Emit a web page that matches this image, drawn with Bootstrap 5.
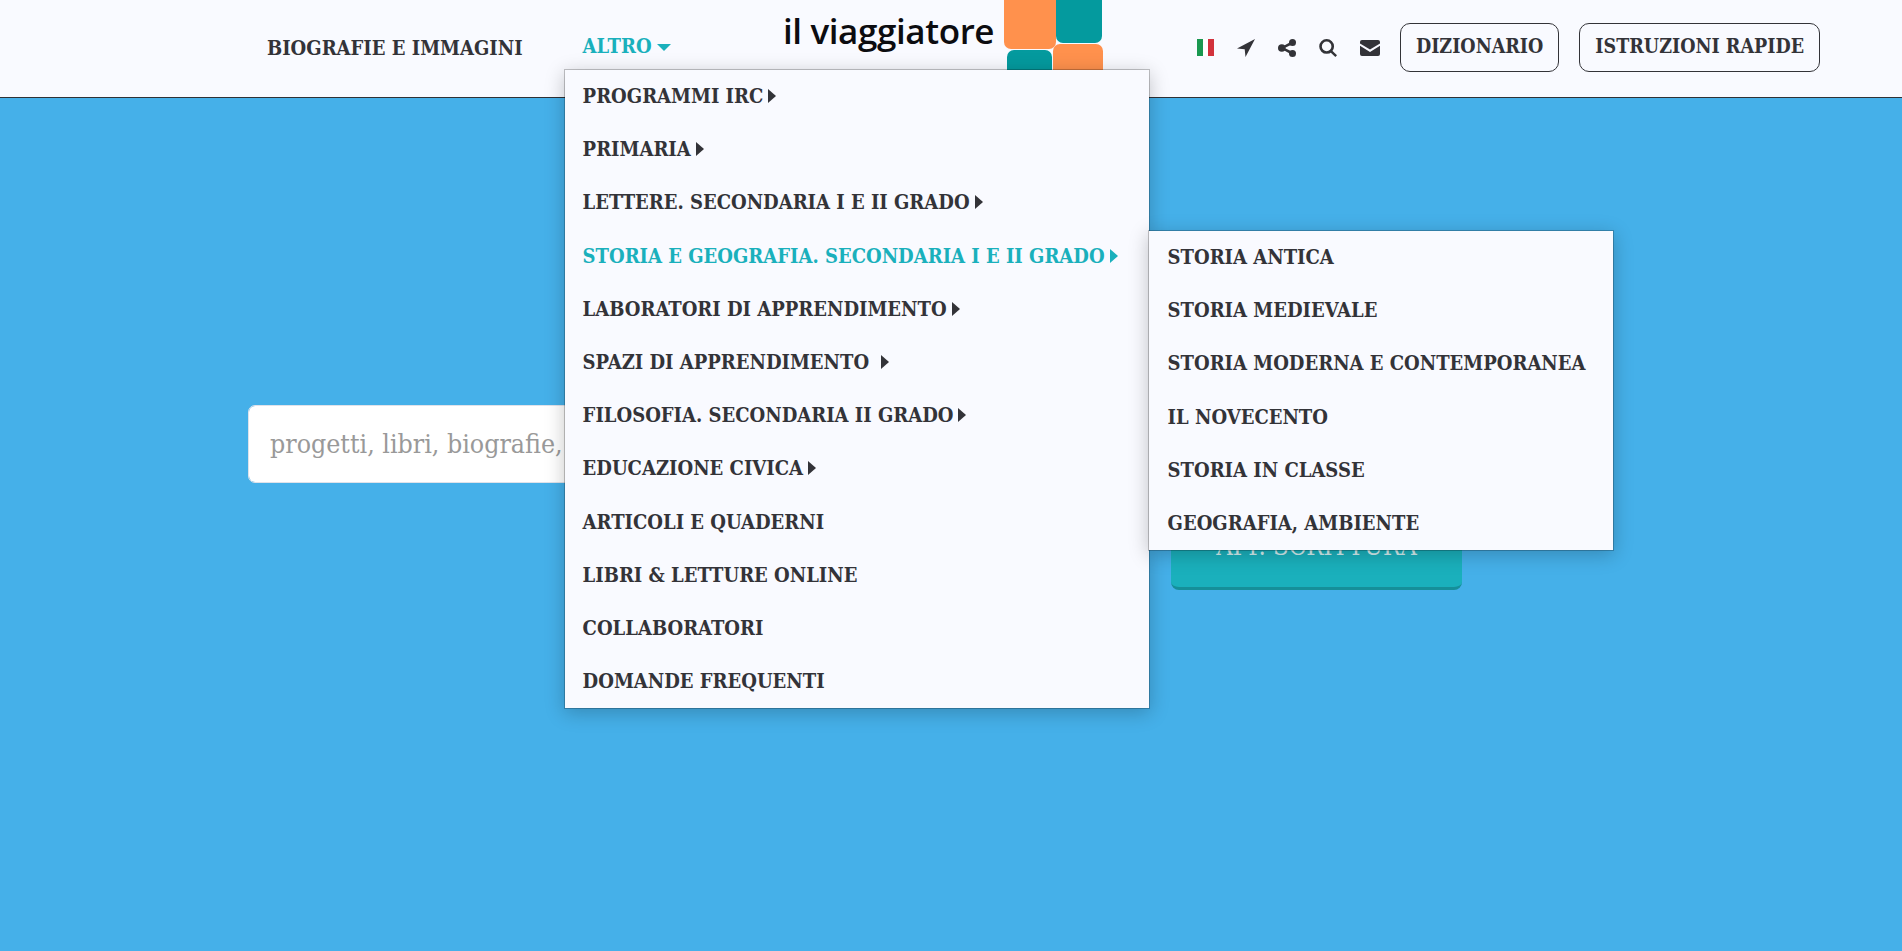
<!DOCTYPE html>
<html lang="it">
<head>
<meta charset="utf-8">
<title>il viaggiatore</title>
<link rel="stylesheet" href="https://cdn.jsdelivr.net/npm/bootstrap@5.3.0/dist/css/bootstrap.min.css">
<style>
:root{--ink:#333338;--teal:#1ab0bc;--paper:#f9faff;}
html,body{height:100%;}
body{background:#45b0e9;font-family:"DejaVu Serif Condensed","DejaVu Serif","Liberation Serif",serif;overflow:hidden;}
.topbar{height:98px;background:var(--paper);border-bottom:1px solid #2f3136;padding:0 82px 2px 267px;}
.mainlink{font-size:20px;font-weight:700;color:var(--ink);text-decoration:none;line-height:1;white-space:nowrap;}
.mainlink.is-open{color:var(--teal);}
.links{gap:60px;width:453px;flex:none;}
.tri-down{display:inline-block;width:0;height:0;border-left:7px solid transparent;border-right:7px solid transparent;border-top:7px solid var(--teal);margin-left:5px;vertical-align:middle;}
.tri-right{display:inline-block;width:0;height:0;border-top:7px solid transparent;border-bottom:7px solid transparent;border-left:8px solid currentColor;margin-left:5px;vertical-align:-2px;}
.tri-gap{margin-left:12px;}
.holder{position:relative;}
.menu-main,.menu-sub{--bs-dropdown-padding-y:0;--bs-dropdown-border-radius:0;--bs-dropdown-bg:var(--paper);--bs-dropdown-border-color:rgba(0,0,0,.22);display:block;box-shadow:0 4px 18px rgba(0,0,0,.22);border-radius:0;padding:0;}
.menu-main{position:absolute;left:-19px;top:33px;width:586px;z-index:20;}
.menu-sub{position:absolute;left:565px;top:194px;width:466px;z-index:21;}
.menu-main .dropdown-item,.menu-sub .dropdown-item{height:53.2px;padding:0 0 0 18px;display:flex;align-items:center;font-size:20px;font-weight:700;color:var(--ink);white-space:nowrap;background:transparent;}
.menu-sub .dropdown-item{padding-left:19px;}
.menu-main .dropdown-item.is-open{color:var(--teal);}
.brand{position:relative;width:400px;height:97px;flex:none;overflow:hidden;}
.brand-name{font-family:"Open Sans",sans-serif;font-weight:600;font-size:35px;color:#0c0c10;line-height:1;white-space:nowrap;letter-spacing:-.4px;}
.brand-row{padding-top:14px;margin-left:63px;}
.tile{position:absolute;border-radius:7px;}
.tile-a{left:284px;top:-6px;width:52px;height:56px;background:#ff914d;}
.tile-b{left:336px;top:-6px;width:46px;height:50px;background:#049a9e;}
.tile-c{left:287px;top:51px;width:45px;height:30px;background:#049a9e;}
.tile-d{left:333px;top:45px;width:50px;height:36px;background:#ff914d;}
.tools{gap:23px;margin-right:20px;}
.tool{display:block;width:18px;height:18px;fill:var(--ink);}
.tool-wide{width:20px;}
.flag{width:17px;height:17px;display:flex;}
.flag i{flex:1;}
.flag-g{background:#1a9850;}
.flag-w{background:#fff;}
.flag-r{background:#d2323c;}
.btn-line{--bs-btn-border-color:#333338;--bs-btn-color:var(--ink);--bs-btn-border-radius:10px;--bs-btn-font-weight:700;height:49px;font-size:19.5px;padding:0 15px;line-height:45px;white-space:nowrap;}
.btn-next{margin-left:20px;}
.stage{padding:307px 0 0 248px;}
.search-box{width:1250px;height:78px;border-radius:7px;font-size:26.5px;font-weight:400;padding:0 21px 2px;border:1px solid #dfe2ea;}
.search-box::placeholder{color:#999;}
.app-btn{margin:37px 0 0 923px;width:291px;height:70px;background:#1ab0bc;color:#d5eef0;border:0;border-bottom:3px solid #158f99;border-radius:8px;font-size:25.5px;font-weight:400;padding:0 0 14px;}
</style>
</head>
<body>
<header class="topbar d-flex align-items-center">
  <nav class="links d-flex align-items-center">
    <a class="mainlink" href="#">BIOGRAFIE E IMMAGINI</a>
    <div class="holder">
      <a class="mainlink is-open" href="#">ALTRO<span class="tri-down"></span></a>
      <div class="dropdown-menu menu-main show">
        <a class="dropdown-item" href="#">PROGRAMMI IRC<span class="tri-right"></span></a>
        <a class="dropdown-item" href="#">PRIMARIA<span class="tri-right"></span></a>
        <a class="dropdown-item" href="#">LETTERE. SECONDARIA I E II GRADO<span class="tri-right"></span></a>
        <a class="dropdown-item is-open" href="#">STORIA E GEOGRAFIA. SECONDARIA I E II GRADO<span class="tri-right"></span></a>
        <a class="dropdown-item" href="#">LABORATORI DI APPRENDIMENTO<span class="tri-right"></span></a>
        <a class="dropdown-item" href="#">SPAZI DI APPRENDIMENTO<span class="tri-right tri-gap"></span></a>
        <a class="dropdown-item" href="#">FILOSOFIA. SECONDARIA II GRADO<span class="tri-right"></span></a>
        <a class="dropdown-item" href="#">EDUCAZIONE CIVICA<span class="tri-right"></span></a>
        <a class="dropdown-item" href="#">ARTICOLI E QUADERNI</a>
        <a class="dropdown-item" href="#">LIBRI &amp; LETTURE ONLINE</a>
        <a class="dropdown-item" href="#">COLLABORATORI</a>
        <a class="dropdown-item" href="#">DOMANDE FREQUENTI</a>
      </div>
      <div class="dropdown-menu menu-sub show">
        <a class="dropdown-item" href="#">STORIA ANTICA</a>
        <a class="dropdown-item" href="#">STORIA MEDIEVALE</a>
        <a class="dropdown-item" href="#">STORIA MODERNA E CONTEMPORANEA</a>
        <a class="dropdown-item" href="#">IL NOVECENTO</a>
        <a class="dropdown-item" href="#">STORIA IN CLASSE</a>
        <a class="dropdown-item" href="#">GEOGRAFIA, AMBIENTE</a>
      </div>
    </div>
  </nav>
  <div class="brand">
    <div class="brand-row brand-name">il viaggiatore</div>
    <span class="tile tile-a"></span><span class="tile tile-b"></span><span class="tile tile-c"></span><span class="tile tile-d"></span>
  </div>
  <div class="tools d-flex align-items-center ms-auto">
    <span class="flag"><i class="flag-g"></i><i class="flag-w"></i><i class="flag-r"></i></span>
    <svg class="tool" viewBox="0 0 18 18"><path d="M18 0 8.500 18 7.700 10.300 0 9.500Z"/></svg>
    <svg class="tool" viewBox="0 0 18 18"><circle cx="14.500" cy="3.500" r="3.500"/><circle cx="14.500" cy="14.500" r="3.500"/><circle cx="3.800" cy="9" r="3.800"/><path d="M3.500 8 13.500 2.500 15 5 4.500 10ZM3.500 10 13.500 15.500 15 13 4.500 8Z"/></svg>
    <svg class="tool" viewBox="1 1 16.500 16.500"><path fill-rule="evenodd" d="M8 1a6.800 6.800 0 1 1 0 13.600A6.800 6.800 0 0 1 8 1Zm0 2.400a4.400 4.400 0 1 0 0 8.800 4.400 4.400 0 0 0 0-8.800Z"/><path d="M12 10.700 17.500 16 16 17.500 10.400 12.300Z"/></svg>
    <svg class="tool tool-wide" viewBox="0 0 20 18"><path d="M2 1h16a2 2 0 0 1 2 2v1.400L10 10.500 0 4.400V3a2 2 0 0 1 2-2Z"/><path d="M0 6.800 10 13 20 6.800V15a2 2 0 0 1-2 2H2a2 2 0 0 1-2-2Z"/></svg>
  </div>
  <a class="btn btn-line" href="#">DIZIONARIO</a>
  <a class="btn btn-line btn-next" href="#">ISTRUZIONI RAPIDE</a>
</header>
<main class="stage">
  <input class="form-control search-box" type="text" placeholder="progetti, libri, biografie, immagini">
  <button class="btn app-btn d-block" type="button">APP. SCRITTURA</button>
</main>
<script src="https://cdn.jsdelivr.net/npm/bootstrap@5.3.0/dist/js/bootstrap.bundle.min.js"></script>
</body>
</html>
